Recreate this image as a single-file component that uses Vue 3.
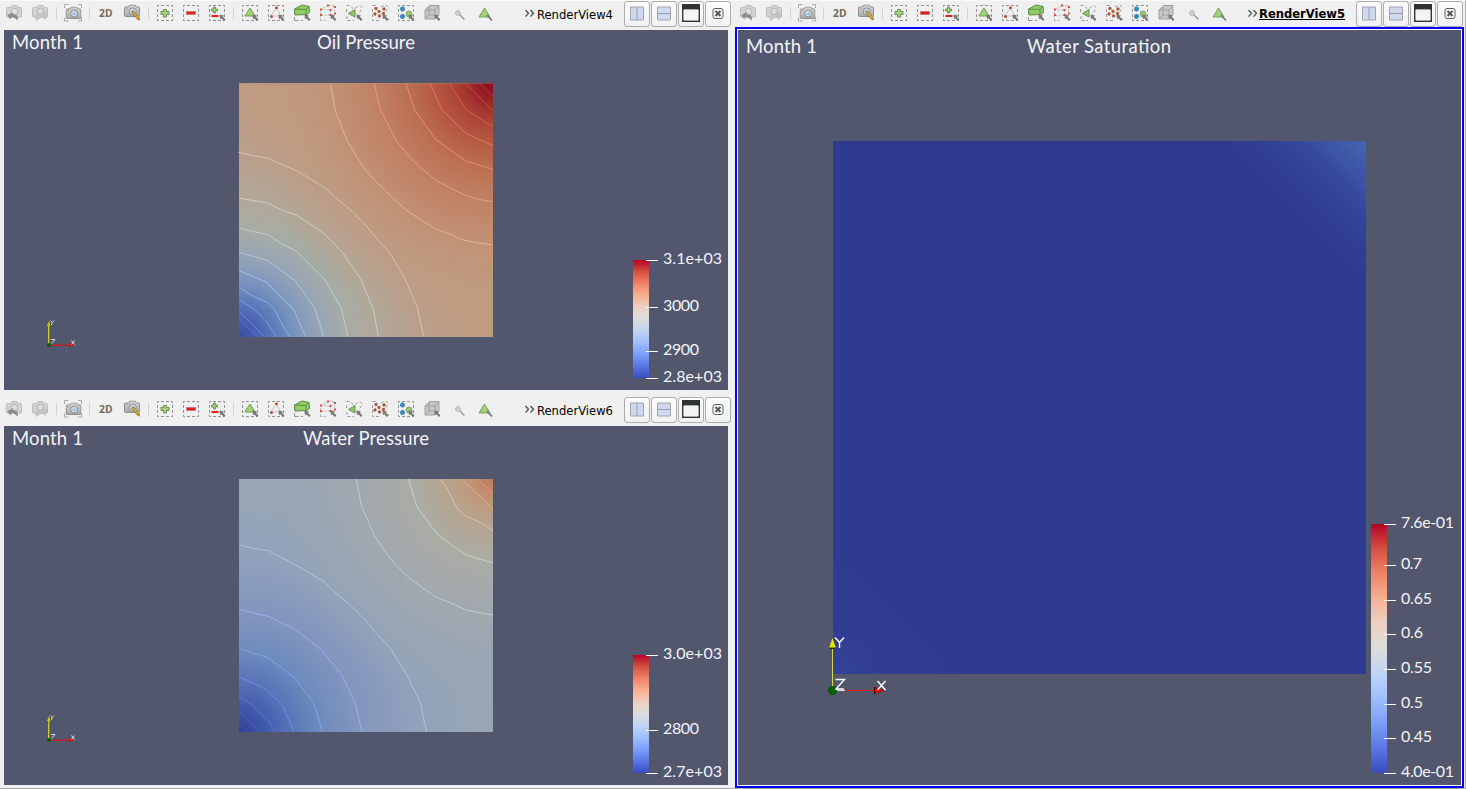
<script setup>
const group = [
  ['undo', 'redo'],
  ['capture'],
  ['two-d', 'adjust'],
  ['add', 'remove', 'toggle'],
  ['sel-cells', 'sel-points', 'sel-frustum-cells', 'sel-frustum-points', 'sel-poly-cells', 'sel-poly-points', 'sel-blocks', 'sel-box', 'hover-point', 'hover-cell'],
]
const buttons = ['split-h', 'split-v', 'maximize', 'close']

const oilLines = [
  '316,40 331,123 364,207 390,252 416,293 450,332 500,381 547,423 590,451 634,478 665,489 718,511 760,519 804,525',
  '447,40 467,120 512,210 550,258 585,292 634,332 675,353 720,376 765,389 804,395',
  '543,40 569,120 632,209 722,273 804,298',
  '615,40 650,118 722,190 804,227',
  '673,40 724,120 804,170',
  '722,40 804,123', '765,40 804,80',
  '40,247 80,256 127,264 180,288 213,301 250,324 297,351 332,384 377,420 425,469 457,509 491,544 515,583 541,628 555,662 578,713 585,750 596,800',
  '42,384 80,391 125,398 170,420 213,435 260,466 300,493 350,544 385,595 409,631 445,717 460,800',
  '42,474 80,484 127,493 170,521 216,545 260,590 300,630 350,716 368,800',
  '42,547 127,571 211,632 270,715 296,800',
  '42,602 125,637 206,718 242,800',
  '42,651 85,679 130,699 148,717 167,755 194,800',
  '42,689 88,718 126,757 154,800',
  '42,725 90,771 117,800', '42,745 97,800', '42,768 74,800', '42,784 58,800',
]
const waterLines = [
  '394,42 410,126 430,168 448,211 481,261 510,297 546,333 592,368 631,395 675,413 720,434 765,443 804,450',
  '550,42 575,124 636,207 680,240 721,269 762,282 804,293',
  '645,42 665,69 696,128 718,151 765,172 804,197',
  '710,42 804,132', '759,42 804,87',
  '42,240 80,249 130,257 190,288 245,319 298,351 325,378 382,426 425,470 455,506 494,547 518,585 547,632 588,717 595,760 605,800',
  '42,433 90,445 133,455 175,476 211,493 250,524 288,553 352,632 392,718 411,800',
  '42,551 127,577 209,638 267,715 293,800',
  '42,636 90,656 125,675 173,722 207,800',
  '42,694 80,718 130,768 149,800',
  '42,741 102,800', '42,776 66,800',
]
const oilStroke = ['#e6b69c', '#e9a384', '#ea9374', '#e27e64', '#d36653', '#c94c40', '#bd3732', '#ddc3b3', '#d6cfc6', '#c5ced3', '#b7cae4', '#a6c1ee', '#94b0ed', '#7f9fe8', '#6e8ddd', '#5c77cf', '#4d64bd', '#455bb5']
const waterStroke = ['#c5d0df', '#d0d5d4', '#dfc5b4', '#e5b095', '#e69b7d', '#b1c7e5', '#9bb7ec', '#87a5ea', '#738fdf', '#607ad0', '#5068c0', '#4358b2']

const left = [
  {
    name: 'RenderView4', top: 30, h: 360, title: 'Oil Pressure', tx: 317, tw: 98, base: '#bd9d84', key: 'oil',
    lines: oilLines, strokes: oilStroke, plotY: 70, plotTop: 40, plotH: 761, barTop: 260.5, origin: 345,
    labels: [['3.1e+03', 260.5, 59], ['3000', 307.3, 36], ['2900', 351.3, 36], ['2.8e+03', 378.3, 59]],
  },
  {
    name: 'RenderView6', top: 426, h: 359, title: 'Water Pressure', tx: 303, tw: 126, base: '#98a5b4', key: 'water',
    lines: waterLines, strokes: waterStroke, plotY: 465, plotTop: 42, plotH: 759, barTop: 655.5, origin: 740,
    labels: [['3.0e+03', 655.5, 59], ['2800', 730.3, 36], ['2.7e+03', 773.3, 59]],
  },
]
const satLabels = [['7.6e-01', 524.3, 53], ['0.7', 565.3, 21], ['0.65', 600.3, 31], ['0.6', 634.3, 22], ['0.55', 669.3, 31], ['0.5', 704.3, 22], ['0.45', 738.3, 31], ['4.0e-01', 773.3, 53]]
const ramp = ['#b40426', '#d55042', '#ee8468', '#f7b093', '#edd1c2', '#dddddd', '#c0d4f5', '#9ebeff', '#7b9ff9', '#5977e3', '#3b4cc0']
const gradients = {
  oilBl: [[0, '#3a479d'], [5, '#4359ad'], [10, '#4e6ab4'], [15, '#5f7dbb'], [20, '#738fbe'], [26, '#879cbc'], [33, '#98a5b3'], [42, '#a7aca6'], [52, '#b0a99b'], [72, '#ba9f8a'], [88, '#bd9d84'], [100, '#bf9b80']],
  waterBl: [[0, '#323e95'], [6, '#3a4da5'], [12, '#455eaf'], [20, '#5873b8'], [32, '#6e8bbd'], [46, '#8195bf'], [70, '#91a2ba'], [100, '#99a6b4']],
}
const corner = {
  oilTr: [[0, '#8b0b1a', 1], [6, '#982027', 1], [11, '#a43430', 1], [16, '#ad4637', 1], [24, '#b65b43', 1], [34, '#bc7052', 1], [47, '#c18265', 1], [63, '#c29074', 0.9], [80, '#c0987d', 0.5], [100, '#bf9b80', 0]],
  waterTr: [[0, '#c2795b', 1], [6, '#c18b6d', 1], [11, '#be9a80', 1], [19, '#b6a590', 1], [32, '#aaaca5', 1], [53, '#a2a8ae', 0.95], [70, '#9ba6b2', 0.6], [90, '#98a5b4', 0]],
}
</script>

<template>
  <div class="window">
    <svg class="defs" width="0" height="0">
      <defs>
        <linearGradient id="ramp" x1="0" y1="0" x2="0" y2="1">
          <stop v-for="(c, i) in ramp" :key="i" :offset="i * 10 + '%'" :stop-color="c" />
        </linearGradient>
        <radialGradient v-for="(stops, k) in gradients" :id="k" :key="k" gradientUnits="userSpaceOnUse" cx="42" cy="801" r="760">
          <stop v-for="s in stops" :key="s[0]" :offset="s[0] + '%'" :stop-color="s[1]" />
        </radialGradient>
        <radialGradient v-for="(stops, k) in corner" :id="k" :key="k" gradientUnits="userSpaceOnUse" cx="804" cy="40" r="760">
          <stop v-for="s in stops" :key="s[0]" :offset="s[0] + '%'" :stop-color="s[1]" :stop-opacity="s[2]" />
        </radialGradient>
        <linearGradient id="satTr" gradientUnits="userSpaceOnUse" x1="1366" y1="141" x2="1296" y2="211">
          <stop offset="0" stop-color="#4866b1" />
          <stop offset=".32" stop-color="#3b52a2" />
          <stop offset=".5" stop-color="#35489b" />
          <stop offset=".75" stop-color="#314093" />
          <stop offset="1" stop-color="#2f3b8f" />
        </linearGradient>
        <radialGradient id="satBl" gradientUnits="userSpaceOnUse" cx="833" cy="674" r="125">
          <stop offset="0" stop-color="#334296" />
          <stop offset=".4" stop-color="#303d92" />
          <stop offset="1" stop-color="#2f3b8f" />
        </radialGradient>
        <linearGradient id="body" x1="0" y1="0" x2="0" y2="1">
          <stop offset="0" stop-color="#d9d9d9" />
          <stop offset="1" stop-color="#a9a9a9" />
        </linearGradient>
      </defs>
      <symbol id="cam" viewBox="0 0 16 13">
        <path d="M1.5 2.5h3l1.5-2h5l1.5 2h2q1 0 1 1v7.500q0 1-1 1h-13q-1 0-1-1v-7.500q0-1 1-1z" fill="url(#body)" stroke="#8e8e8e" />
        <circle cx="8.700" cy="7" r="3.600" fill="#d6dde2" stroke="#858b90" />
        <circle cx="8.700" cy="7" r="2.100" fill="#8fc4e6" />
        <path d="M7.500 6.500l1.500-1" stroke="#eef8ff" />
        <rect x="2" y="3.500" width="1.500" height="1.500" fill="#e88" />
      </symbol>
      <symbol id="fadecam" viewBox="0 0 16 13">
        <path d="M1.500 2.500h3l1.500-2h5l1.500 2h2q1 0 1 1v7.500q0 1-1 1h-13q-1 0-1-1v-7.500q0-1 1-1z" fill="#d2d2d2" stroke="#bdbdbd" />
        <circle cx="8.500" cy="6.500" r="3.300" fill="#dedede" stroke="#b4b4b4" />
      </symbol>
      <symbol id="dash" viewBox="0 0 26 26">
        <rect x="5.500" y="5.500" width="15" height="15" fill="none" stroke="#929292" stroke-dasharray="3 2" stroke-dashoffset="1.500" />
      </symbol>
      <symbol id="ptr" viewBox="0 0 26 26">
        <path d="M15.500 14.500l4.500 1-1.200 1.200 2.700 2.800-1.500 1.500-2.800-2.800-1.200 1.100z" fill="#777" />
      </symbol>
      <symbol id="undo" viewBox="0 0 26 26">
        <use href="#fadecam" x="5" y="5" width="16" height="13" />
        <path d="M16.500 20.500q2-5.500-4-6.500l-1-.2.700-1.900-6 3.300 3.200 4.200.900-2q3.200-.5 6.200 3.100z" fill="#8d8d8d" />
      </symbol>
      <symbol id="redo" viewBox="0 0 26 26">
        <use href="#fadecam" x="5" y="5" width="16" height="13" />
        <path d="M9.500 20.500q-2-5 3.500-6.500l3.300-.2-.8-2 5.200 3.500-3 4.200-.8-2.300q-4-.5-7.400 3.300z" fill="#c6c6c6" stroke="#b1b1b1" stroke-width=".6" />
      </symbol>
      <symbol id="capture" viewBox="0 0 26 26">
        <path d="M4.500 8v-3.500h4M18 4.500h3.500v3.500M21.500 17.500v3.500h-3.500M8.500 21h-4v-3.500" fill="none" stroke="#a8a8a8" />
        <use href="#cam" x="5.500" y="6.500" width="16" height="13" />
      </symbol>
      <symbol id="two-d" viewBox="0 0 26 26">
        <text x="6" y="17.300" textLength="13.500" lengthAdjust="spacingAndGlyphs" font-family="Open Sans, sans-serif" font-weight="700" font-size="11" fill="#706c5c">2D</text>
      </symbol>
      <symbol id="adjust" viewBox="0 0 26 26">
        <use href="#cam" x="5" y="4.500" width="16" height="13" />
        <path d="M12.500 12l1.900-1.200 6 7-.1 2.300-2.200-1.100z" fill="#dfad35" stroke="#866d32" stroke-width=".8" />
      </symbol>
      <symbol id="add" viewBox="0 0 26 26">
        <use href="#dash" width="26" height="26" />
        <path d="M11.500 9.500h3v2h2.500v3h-2.500v2.500h-3v-2.500h-2.500v-3h2.500z" fill="#a5d47c" stroke="#6c8d55" />
      </symbol>
      <symbol id="remove" viewBox="0 0 26 26">
        <use href="#dash" width="26" height="26" />
        <rect x="8.500" y="11.500" width="9" height="3" fill="#e31c1c" stroke="#b77" stroke-width=".7" />
      </symbol>
      <symbol id="toggle" viewBox="0 0 26 26">
        <use href="#dash" width="26" height="26" />
        <path d="M9.500 7h2v2h2v2h-2v2h-2v-2h-2v-2h2z" fill="#9fce77" stroke="#6c8d55" stroke-width=".9" />
        <rect x="7.500" y="15" width="7" height="2" fill="#e31c1c" />
        <use href="#ptr" width="26" height="26" />
      </symbol>
      <symbol id="sel-cells" viewBox="0 0 26 26">
        <use href="#dash" width="26" height="26" />
        <path d="M13 8l5 8h-10.200z" fill="#9fd477" stroke="#6e9b52" />
        <use href="#ptr" width="26" height="26" />
      </symbol>
      <symbol id="sel-points" viewBox="0 0 26 26">
        <use href="#dash" width="26" height="26" />
        <path d="M13 8l5 8h-10z" fill="none" stroke="#c7c7c7" />
        <circle cx="13.500" cy="7.700" r="1.500" fill="#b5522b" /><circle cx="8.500" cy="16.500" r="1.500" fill="#b5522b" />
        <use href="#ptr" width="26" height="26" />
      </symbol>
      <symbol id="sel-frustum-cells" viewBox="0 0 26 26">
        <path d="M5.500 17v3.500h4M12 20.500h2M5.500 14v-3" fill="none" stroke="#929292" />
        <path d="M5.500 9l7.500-4 7 1.500.5 6-3 2-11.500.5z" fill="#91ce65" stroke="#5d8b45" />
        <path d="M5.500 9l11.500.5 3-3M17 9.500v5" fill="none" stroke="#5d8b45" />
        <use href="#ptr" width="26" height="26" />
      </symbol>
      <symbol id="sel-frustum-points" viewBox="0 0 26 26">
        <path d="M5.500 20.500v-11l8-4h6v9l-4 .5-10 .5M5.500 9.500l10 .5v5M15.500 10l4-4.500M5.500 20.500h6" fill="none" stroke="#a3a3a3" stroke-dasharray="2 1.300" stroke-width=".8" />
        <g fill="#e94b43"><path d="M5 8.500h2v2H5zM12 4.500h2v2h-2zM19 6h2v2h-2zM14.500 9h2v2h-2zM5 14h2v2H5zM14.500 14h2v2h-2zM19 12.500h2v2h-2z" /></g>
        <use href="#ptr" width="26" height="26" />
      </symbol>
      <symbol id="sel-poly-cells" viewBox="0 0 26 26">
        <path d="M5.500 5.500q5-.5 6 3 2 .5 4-1 3-3 5-.5 1 2-2 5.500l-2 2M5.500 9v3M6 16v4.500h7" fill="none" stroke="#999" stroke-dasharray="3 2" />
        <path d="M7.500 13.500l6.500-4v7.500z" fill="#92c76c" stroke="#6b914f" />
        <use href="#ptr" width="26" height="26" />
      </symbol>
      <symbol id="sel-poly-points" viewBox="0 0 26 26">
        <path d="M5.500 5.500h5M14 7l4-2q4 1 2 5l-2 3M5.500 9v11.500h8M21 18v2" fill="none" stroke="#999" stroke-dasharray="3 2" />
        <g fill="#b75631" stroke="#8e4a2f" stroke-width=".4"><circle cx="9" cy="8.500" r="1.400" /><circle cx="12" cy="11.500" r="1.400" /><circle cx="17" cy="9" r="1.400" /><circle cx="8" cy="14" r="1.400" /><circle cx="12.500" cy="16" r="1.400" /><circle cx="16.500" cy="13.500" r="1.400" /></g>
        <use href="#ptr" width="26" height="26" />
      </symbol>
      <symbol id="sel-blocks" viewBox="0 0 26 26">
        <use href="#dash" width="26" height="26" />
        <g fill="#2d8dc8" stroke="#43769a" stroke-width=".6"><circle cx="9.500" cy="9" r="2.200" /><circle cx="9.500" cy="16.500" r="2.200" /></g>
        <circle cx="16" cy="14" r="3" fill="#95ca70" stroke="#6e9158" stroke-width=".7" />
        <use href="#ptr" width="26" height="26" />
      </symbol>
      <symbol id="sel-box" viewBox="0 0 26 26">
        <path d="M6 10l4.500-4.500h9.500v9l-4 4.500h-10z" fill="#c7c7c7" stroke="#a0a0a0" />
        <path d="M6 10h10v9M16 10l4-4.500M10 6v9l-4 4M10 15h6" fill="none" stroke="#a0a0a0" />
        <use href="#ptr" width="26" height="26" />
      </symbol>
      <symbol id="hover-point" viewBox="0 0 26 26">
        <circle cx="11" cy="13" r="2.400" fill="#d1d1d1" stroke="#b6b6b6" />
        <path d="M13 15l4.500 4.500" stroke="#999" stroke-width="1.500" />
      </symbol>
      <symbol id="hover-cell" viewBox="0 0 26 26">
        <path d="M12.500 8l5.500 9h-11z" fill="#9fd477" stroke="#7aa25f" />
        <path d="M15 15l5 5.500" stroke="#777" stroke-width="1.800" />
      </symbol>
      <symbol id="split-h" viewBox="0 0 26 26">
        <path d="M6.500 6h13v13h-13z" fill="#d0d8ee" stroke="#a0a4b0" /><path d="M13 6v13" stroke="#9a9eaa" />
      </symbol>
      <symbol id="split-v" viewBox="0 0 26 26">
        <path d="M6.500 6h13v13h-13z" fill="#d0d8ee" stroke="#a0a4b0" /><path d="M6 12.500h14" stroke="#9a9eaa" />
      </symbol>
      <symbol id="maximize" viewBox="0 0 26 26">
        <path d="M4 3h18v18H4z" fill="#303333" /><rect x="5.500" y="8.500" width="15" height="11" rx="1" fill="#f3f3f3" stroke="#aaa" />
      </symbol>
      <symbol id="close" viewBox="0 0 26 26">
        <rect x="8" y="7.500" width="10" height="10" rx="2" fill="#f7f7f7" stroke="#5f5f5f" />
        <path d="M10.500 10l5 5M15.500 10l-5 5" stroke="#555" stroke-width="1.900" />
      </symbol>
    </svg>

    <div class="column">
      <section v-for="v in left" :key="v.name" class="pane" :class="v.key">
        <header class="toolbar">
          <div v-for="(g, i) in group" :key="i" class="group">
            <svg v-for="n in g" :key="n" class="tool" :class="n" width="26" height="26"><use :href="'#' + n" /></svg>
          </div>
          <svg class="more" width="12" height="26"><path d="M1.500 10l3 3.300-3 3.300M6.500 10l3 3.300-3 3.300" /></svg>
          <svg class="name" width="78" height="26"><text x="0" y="19" textLength="76" lengthAdjust="spacingAndGlyphs">{{ v.name }}</text></svg>
          <div class="buttons">
            <button v-for="b in buttons" :key="b" type="button"><svg width="26" height="26"><use :href="'#' + b" /></svg></button>
          </div>
        </header>
        <svg class="view" width="724" :height="v.h" :viewBox="`4 ${v.top} 724 ${v.h}`">
          <text class="title" x="12" :y="v.top + 19" textLength="71">Month 1</text>
          <text class="title" :x="v.tx" :y="v.top + 19" :textLength="v.tw">{{ v.title }}</text>
          <g :transform="`translate(225 ${v.plotY}) scale(.33333)`">
            <rect x="42" :y="v.plotTop" width="762" :height="v.plotH" :fill="v.base" />
            <rect x="42" :y="v.plotTop" width="762" :height="v.plotH" :fill="`url(#${v.key}Bl)`" />
            <rect x="42" :y="v.plotTop" width="762" :height="v.plotH" :fill="`url(#${v.key}Tr)`" />
            <polyline v-for="(p, i) in v.lines" :key="i" class="contour" :points="p" :stroke="v.strokes[i]" />
          </g>
          <rect x="633" :y="v.barTop - 0.5" width="16" height="118" fill="url(#ramp)" />
          <g v-for="l in v.labels" :key="l[0]">
            <rect x="646" :y="Math.floor(l[1])" width="12" height="1" fill="#fff" />
            <text class="tick" x="663" :y="Math.floor(l[1]) + 4" :textLength="l[2]">{{ l[0] }}</text>
          </g>
          <g :transform="`translate(49 ${v.origin})`">
            <path d="M-.3 0V-20" stroke="#cfcf1c" stroke-width="1.300" />
            <path d="M-2-19l2-5 1.500 5z" fill="#c9c900" />
            <path d="M0 .2H21" stroke="#dd1212" stroke-width="1.200" />
            <path d="M20-2l5 2-5 2z" fill="#f00" />
            <circle r="2" fill="#005d00" />
            <path class="mark" d="M1.500-24.500l1.700 2 2-2M3.200-22.500l-.8 2.500M2-5.500h4l-3.500 4M22.500-4.500l3 4M25.500-4.500l-3 4" />
          </g>
        </svg>
      </section>
    </div>

    <section class="pane active">
      <header class="toolbar">
        <div v-for="(g, i) in group" :key="i" class="group">
          <svg v-for="n in g" :key="n" class="tool" :class="n" width="26" height="26"><use :href="'#' + n" /></svg>
        </div>
        <svg class="more" width="12" height="26"><path d="M1.500 10l3 3.300-3 3.300M6.500 10l3 3.300-3 3.300" /></svg>
        <svg class="name bold" width="88" height="26">
          <text x="0" y="18" textLength="86" lengthAdjust="spacingAndGlyphs">RenderView5</text>
          <rect x="0" y="19" width="86" height="1" />
        </svg>
        <div class="buttons">
          <button v-for="b in buttons" :key="b" type="button"><svg width="26" height="26"><use :href="'#' + b" /></svg></button>
        </div>
      </header>
      <div class="frame">
        <svg class="view" width="723" height="755" viewBox="738 30 723 755">
          <text class="title" x="746" y="53" textLength="71">Month 1</text>
          <text class="title" x="1027" y="53" textLength="144">Water Saturation</text>
          <rect x="833" y="141" width="533" height="533" fill="#2f3b8f" />
          <path d="M833 549v125h125z" fill="url(#satBl)" />
          <path d="M1226 141h140v140z" fill="url(#satTr)" />
          <path d="M1324.500 141l41.500 47M1363.500 141l3 4" fill="none" stroke="#4760b4" stroke-width=".8" />
          <rect x="1371" y="524" width="16" height="249" fill="url(#ramp)" />
          <g v-for="l in satLabels" :key="l[0]">
            <rect x="1384" :y="Math.floor(l[1])" width="12" height="1" fill="#fff" />
            <text class="tick" x="1401" :y="Math.floor(l[1]) + 4" :textLength="l[2]">{{ l[0] }}</text>
          </g>
          <path d="M832.500 690V648" stroke="#d8d84a" />
          <path d="M829 648l3.500-10 3.500 10z" fill="#e5e500" /><path d="M829 647.500h7v1.500h-7z" fill="#333300" />
          <path d="M836 690.500h9" stroke="#ddd" /><path d="M845 690.500h30" stroke="#ee1515" />
          <path d="M874.500 687l9.500 3.500-9.500 3.500z" fill="#f00" stroke="#700" stroke-width=".5" /><path d="M874 687h1.200v7H874z" fill="#300" />
          <circle cx="832.500" cy="690.500" r="4.600" fill="#005d00" />
          <path class="mark big" d="M835 637.500l4.500 5 4.500-5M839.500 642.500v5.500M835.500 679.500h9l-8.500 9.500h8M877.500 681l8 9M885.500 681l-8 9" />
        </svg>
      </div>
    </section>
  </div>
</template>

<style>
body { background: #f0f0f0; overflow: hidden; }
</style>

<style scoped>
.window {
  display: flex;
  box-sizing: border-box;
  width: 1466px;
  height: 789px;
  border-top: 1px solid #fafafa;
  border-right: 1px solid #b3b3b3;
  border-bottom: 1px solid #a8a8a8;
  background: #f0f0f0;
  overflow: hidden;
}
.defs { flex: none; width: 0; height: 0; }
.column { width: 734px; flex: none; }
.column .view { margin-left: 4px; }
.toolbar { display: flex; height: 29px; padding-left: 1px; box-sizing: border-box; }
.toolbar svg { display: block; flex: none; margin-top: -1px; }
.water .toolbar { height: 36px; padding-top: 7px; }
.group { display: flex; height: 26px; padding-right: 7px; position: relative; }
.group::after { content: ''; position: absolute; right: 3px; top: 6px; width: 1px; height: 12px; background: #d0d0d0; }
.group:nth-child(5)::after { display: none; }
.hover-point { margin-left: 2px; }
.hover-cell { margin-left: -1px; }
.more { margin-left: 19px; fill: none; stroke: #4d4d4d; stroke-width: 1.3; }
.name { margin-left: 1px; font: 12px "DejaVu Sans Condensed", "DejaVu Sans", sans-serif; }
.name.bold { font-weight: 700; margin-left: 0; }
.buttons { display: flex; gap: 1px; height: 26px; margin-left: 9px; }
button {
  width: 26px;
  height: 26px;
  box-sizing: border-box;
  padding: 0;
  border: 1px solid #acacac;
  border-radius: 3px;
  background: linear-gradient(#fdfdfd, #f1f1f1);
}
button svg { margin: -1px; }
.toolbar button svg { margin: -1px 0 0 -1px; }
.view { display: block; background: #52576e; }
.active { width: 731px; flex: none; }
.active .toolbar { height: 26px; }
.active .more { margin-left: 8px; }
.frame { width: 723px; margin-left: 1px; border: 2px solid #00f; padding: 1px; background: #fff; height: 755px; }
.title, .tick { font-family: Lato, sans-serif; fill: #f2f3f6; font-weight: 400; }
.title { font-size: 18.5px; }
.tick { font-size: 16px; }
.contour { fill: none; stroke-width: 2.7; }
.mark { fill: none; stroke: #dfe3ee; stroke-width: .9; }
.big { stroke: #fff; stroke-width: 1.4; }
</style>
